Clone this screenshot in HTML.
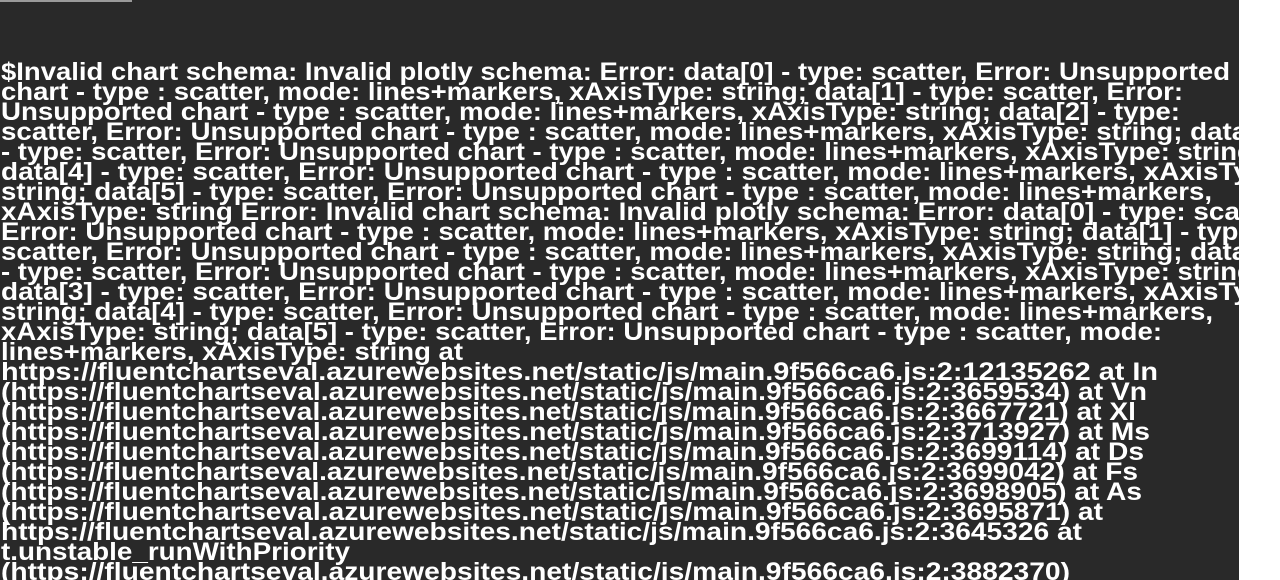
<!DOCTYPE html>
<html><head><meta charset="utf-8"><style>
html,body{margin:0;padding:0;background:#fff;width:1280px;height:580px;overflow:hidden}
#d{position:absolute;left:0;top:0;width:1239px;height:580px;background:#292929;overflow:hidden}
#bar{position:absolute;left:0;top:0;width:132px;height:2px;background:#9a9a9a}
svg{position:absolute;left:0;top:0}
text{font-family:"Liberation Sans",sans-serif;font-weight:bold;font-size:25px;fill:#fff}
</style></head><body>
<div id="d"><div id="bar"></div>
<svg width="1239" height="580">
<text x="1" y="80" textLength="1229" lengthAdjust="spacingAndGlyphs">$Invalid chart schema: Invalid plotly schema: Error: data[0] - type: scatter, Error: Unsupported</text>
<text x="1" y="100" textLength="1182" lengthAdjust="spacingAndGlyphs">chart - type : scatter, mode: lines+markers, xAxisType: string; data[1] - type: scatter, Error:</text>
<text x="1" y="120" textLength="1179" lengthAdjust="spacingAndGlyphs">Unsupported chart - type : scatter, mode: lines+markers, xAxisType: string; data[2] - type:</text>
<text x="1" y="140" textLength="1280" lengthAdjust="spacingAndGlyphs">scatter, Error: Unsupported chart - type : scatter, mode: lines+markers, xAxisType: string; data[3]</text>
<text x="1" y="160" textLength="1262" lengthAdjust="spacingAndGlyphs">- type: scatter, Error: Unsupported chart - type : scatter, mode: lines+markers, xAxisType: string;</text>
<text x="1" y="180" textLength="1290" lengthAdjust="spacingAndGlyphs">data[4] - type: scatter, Error: Unsupported chart - type : scatter, mode: lines+markers, xAxisType:</text>
<text x="1" y="200" textLength="1211" lengthAdjust="spacingAndGlyphs">string; data[5] - type: scatter, Error: Unsupported chart - type : scatter, mode: lines+markers,</text>
<text x="1" y="220" textLength="1290" lengthAdjust="spacingAndGlyphs">xAxisType: string Error: Invalid chart schema: Invalid plotly schema: Error: data[0] - type: scatter,</text>
<text x="1" y="240" textLength="1262" lengthAdjust="spacingAndGlyphs">Error: Unsupported chart - type : scatter, mode: lines+markers, xAxisType: string; data[1] - type:</text>
<text x="1" y="260" textLength="1280" lengthAdjust="spacingAndGlyphs">scatter, Error: Unsupported chart - type : scatter, mode: lines+markers, xAxisType: string; data[2]</text>
<text x="1" y="280" textLength="1262" lengthAdjust="spacingAndGlyphs">- type: scatter, Error: Unsupported chart - type : scatter, mode: lines+markers, xAxisType: string;</text>
<text x="1" y="300" textLength="1290" lengthAdjust="spacingAndGlyphs">data[3] - type: scatter, Error: Unsupported chart - type : scatter, mode: lines+markers, xAxisType:</text>
<text x="1" y="320" textLength="1212" lengthAdjust="spacingAndGlyphs">string; data[4] - type: scatter, Error: Unsupported chart - type : scatter, mode: lines+markers,</text>
<text x="1" y="340" textLength="1161" lengthAdjust="spacingAndGlyphs">xAxisType: string; data[5] - type: scatter, Error: Unsupported chart - type : scatter, mode:</text>
<text x="1" y="360" textLength="462" lengthAdjust="spacingAndGlyphs">lines+markers, xAxisType: string at</text>
<text x="1" y="380" textLength="1157" lengthAdjust="spacingAndGlyphs">https://fluentchartseval.azurewebsites.net/static/js/main.9f566ca6.js:2:12135262 at In</text>
<text x="1" y="400" textLength="1146" lengthAdjust="spacingAndGlyphs">(https://fluentchartseval.azurewebsites.net/static/js/main.9f566ca6.js:2:3659534) at Vn</text>
<text x="1" y="420" textLength="1135" lengthAdjust="spacingAndGlyphs">(https://fluentchartseval.azurewebsites.net/static/js/main.9f566ca6.js:2:3667721) at Xl</text>
<text x="1" y="440" textLength="1149" lengthAdjust="spacingAndGlyphs">(https://fluentchartseval.azurewebsites.net/static/js/main.9f566ca6.js:2:3713927) at Ms</text>
<text x="1" y="460" textLength="1143" lengthAdjust="spacingAndGlyphs">(https://fluentchartseval.azurewebsites.net/static/js/main.9f566ca6.js:2:3699114) at Ds</text>
<text x="1" y="480" textLength="1137" lengthAdjust="spacingAndGlyphs">(https://fluentchartseval.azurewebsites.net/static/js/main.9f566ca6.js:2:3699042) at Fs</text>
<text x="1" y="500" textLength="1141" lengthAdjust="spacingAndGlyphs">(https://fluentchartseval.azurewebsites.net/static/js/main.9f566ca6.js:2:3698905) at As</text>
<text x="1" y="520" textLength="1102" lengthAdjust="spacingAndGlyphs">(https://fluentchartseval.azurewebsites.net/static/js/main.9f566ca6.js:2:3695871) at</text>
<text x="1" y="540" textLength="1081" lengthAdjust="spacingAndGlyphs">https://fluentchartseval.azurewebsites.net/static/js/main.9f566ca6.js:2:3645326 at</text>
<text x="1" y="560" textLength="349" lengthAdjust="spacingAndGlyphs">t.unstable_runWithPriority</text>
<text x="1" y="580" textLength="1069" lengthAdjust="spacingAndGlyphs">(https://fluentchartseval.azurewebsites.net/static/js/main.9f566ca6.js:2:3882370)</text>
</svg></div>
</body></html>
